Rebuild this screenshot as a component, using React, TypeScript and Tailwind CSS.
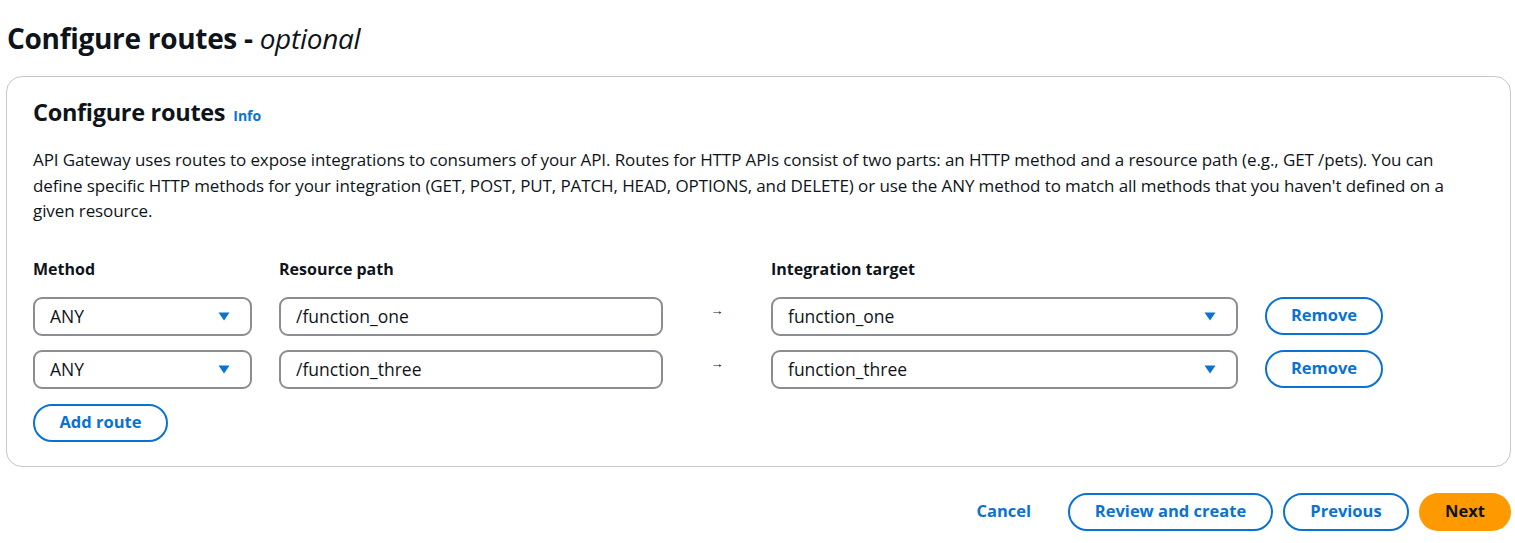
import type { ReactNode } from "react"

const Caret = () => (
    <svg width="12" height="9" viewBox="0 0 12 9" className="shrink-0">
        <path d="M0.5 0.5 L11.5 0.5 L6 8.5 Z" fill="#0972d3" />
    </svg>
)

const Select = ({ value, className }: { value: string; className: string }) => (
    <div className={`h-[39px] flex items-center justify-between pl-[15px] pr-[20px] border-2 border-[#8c8c94] rounded-[9px] bg-white ${className}`}>
        <span className="text-[17.5px]">{value}</span>
        <Caret />
    </div>
)

const OutlineButton = ({ children, className = "" }: { children: ReactNode; className?: string }) => (
    <button className={`h-[38px] rounded-full border-2 border-[#0972d3] text-[#0972d3] font-bold text-[16.5px] bg-white ${className}`}>
        {children}
    </button>
)

const routes = [
    { method: "ANY", path: "/function_one", target: "function_one" },
    { method: "ANY", path: "/function_three", target: "function_three" },
]

export default function App() {
    return (
        <div className="min-h-screen bg-white text-[#0f141a] pl-[6px] pr-[4px] pt-[20px]" style={{ fontFamily: '"Open Sans", "Noto Sans", sans-serif' }}>
            <h1 className="text-[28px] font-bold leading-[36px] tracking-[-0.3px] pl-[1px]">
                Configure routes - <i className="font-normal">optional</i>
            </h1>

            <div className="mt-[20px] border border-[#c6c6cd] rounded-[16px] px-[26px] pt-[20px] pb-[24px]">
                <div className="flex items-baseline gap-[8px]">
                    <h2 className="text-[23.5px] font-bold leading-[30px] tracking-[-0.3px]">Configure routes</h2>
                    <a className="text-[#0972d3] text-[14px] font-bold">Info</a>
                </div>
                <p className="mt-[20px] text-[17px] tracking-[-0.1px] leading-[25.5px] whitespace-nowrap">
                    API Gateway uses routes to expose integrations to consumers of your API. Routes for HTTP APIs consist of two parts: an HTTP method and a resource path (e.g., GET /pets). You can
                    <br />
                    define specific HTTP methods for your integration (GET, POST, PUT, PATCH, HEAD, OPTIONS, and DELETE) or use the ANY method to match all methods that you haven't defined on a
                    <br />
                    given resource.
                </p>

                <div className="mt-[34px] flex text-[16px] font-bold leading-[22px]">
                    <div className="w-[219px]">Method</div>
                    <div className="ml-[27px] w-[384px]">Resource path</div>
                    <div className="ml-[108px]">Integration target</div>
                </div>

                <div className="mt-[17px] flex flex-col gap-[14px]">
                    {routes.map((r) => (
                        <div key={r.path} className="flex items-start">
                            <Select value={r.method} className="w-[219px]" />
                            <div className="ml-[27px] w-[384px] h-[39px] flex items-center px-[15px] border-2 border-[#8c8c94] rounded-[9px] text-[17.5px]">
                                {r.path}
                            </div>
                            <div className="w-[108px] flex justify-center pt-[5px] text-[13px] leading-[16px]">→</div>
                            <Select value={r.target} className="w-[467px]" />
                            <OutlineButton className="ml-[27px] w-[118px]">Remove</OutlineButton>
                        </div>
                    ))}
                    <OutlineButton className="w-[135px] mt-[1px]">Add route</OutlineButton>
                </div>
            </div>

            <div className="mt-[26px] flex justify-end items-center gap-[10px]">
                <button className="text-[#0972d3] font-bold text-[16.5px] h-[38px] mr-[27px]">Cancel</button>
                <OutlineButton className="w-[205px]">Review and create</OutlineButton>
                <OutlineButton className="w-[126px]">Previous</OutlineButton>
                <button className="h-[38px] w-[92px] rounded-full bg-[#ff9900] text-[#0f141a] font-bold text-[16.5px]">Next</button>
            </div>
        </div>
    )
}
